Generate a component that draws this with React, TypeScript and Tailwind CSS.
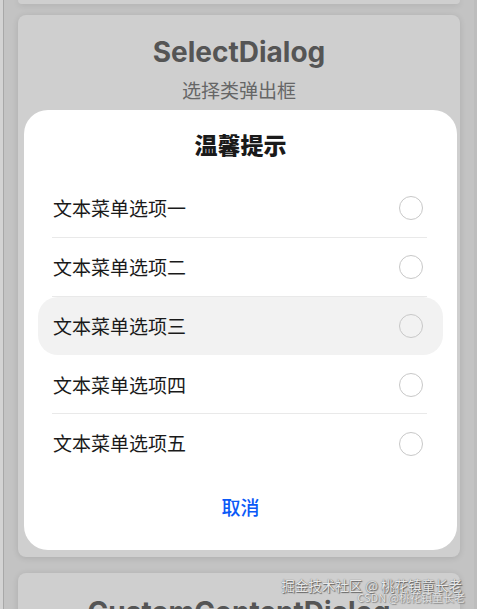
const options = ["文本菜单选项一", "文本菜单选项二", "文本菜单选项三", "文本菜单选项四", "文本菜单选项五"];

const cjk = { fontFamily: '"Noto Sans CJK SC", "Noto Sans", sans-serif' };
const latin = { fontFamily: 'Inter, "Noto Sans CJK SC", sans-serif' };

function Card({ title, subtitle, className }: { title: string; subtitle?: string; className: string }) {
  return (
    <div className={`shrink-0 mx-[14px] rounded-[8px] bg-[#cfcfcf] shadow-[0_1px_6px_rgba(0,0,0,0.12)] flex flex-col items-center ${className}`}>
      <div className="text-[28px] leading-[36px] font-bold text-[#555555]" style={latin}>
        {title}
      </div>
      {subtitle && (
        <div className="mt-[7px] text-[19px] leading-[26px] text-[#666666]" style={cjk}>
          {subtitle}
        </div>
      )}
    </div>
  );
}

export default function App() {
  return (
    <div className="relative w-[477px] h-[609px] overflow-hidden bg-[#c3c3c3] flex">
      <div className="w-[3px] bg-[#d3d3d3]" />
      <div className="w-[1px] bg-[#a8a8a8]" />
      <div className="flex-1 flex flex-col">
        <div className="shrink-0 mx-[14px] h-[4px] rounded-b-[8px] bg-[#cfcfcf] shadow-[0_1px_6px_rgba(0,0,0,0.12)]" />
        <Card title="SelectDialog" subtitle="选择类弹出框" className="mt-[11px] h-[542px] pt-[19px]" />
        <Card title="CustomContentDialog" className="mt-[16px] h-[60px] pt-[21px]" />
      </div>
      <div className="w-[3px] bg-[#bdbdbd]" />

      {/* dialog */}
      <div className="absolute left-[24px] top-[110px] w-[433px] h-[440px] rounded-[24px] bg-white px-[14px] flex flex-col" style={cjk}>
        <div className="h-[69px] flex items-center justify-center text-[23px] font-black text-[#1a1a1a]">温馨提示</div>
        {options.map((o, i) => (
          <div
            key={o}
            className={`relative h-[58.8px] flex items-center pl-[15px] pr-[20px] rounded-[20px] ${i === 2 ? "bg-[#f2f2f2]" : ""}`}
          >
            <span className="flex-1 text-[19px] text-[#1a1a1a]">{o}</span>
            <span className="w-[24px] h-[24px] rounded-full border-[1.5px] border-[#c8c8c8]" />
            {i < 4 && i !== 2 && (
              <div className="absolute left-[14px] right-[16px] bottom-0 h-[1px] bg-[#e9e9e9]" />
            )}
          </div>
        ))}
        <div className="mt-[14px] h-[40px] flex items-center justify-center text-[19px] font-medium text-[#0a59f7]">取消</div>
      </div>

      {/* watermarks */}
      <div
        className="absolute right-[15px] top-[576px] text-[13.5px] leading-[18px] text-[#e8e8e8] [text-shadow:0_0_1px_#555,1px_1px_1px_#666]"
        style={cjk}
      >
        掘金技术社区 @ 桃花镇童长老
      </div>
      <div
        className="absolute right-[12px] top-[590px] text-[11px] leading-[14px] text-[#e4e4e4] [text-shadow:0_0_1px_#777,1px_1px_1px_#888]"
        style={cjk}
      >
        CSDN @桃花镇童长老
      </div>
    </div>
  );
}
